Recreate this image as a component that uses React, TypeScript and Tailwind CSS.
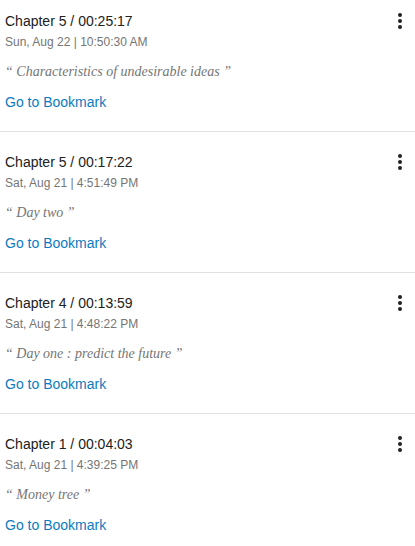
const bookmarks = [
  { chapter: "Chapter 5 / 00:25:17", date: "Sun, Aug 22 | 10:50:30 AM", note: "Characteristics of undesirable ideas" },
  { chapter: "Chapter 5 / 00:17:22", date: "Sat, Aug 21 | 4:51:49 PM", note: "Day two" },
  { chapter: "Chapter 4 / 00:13:59", date: "Sat, Aug 21 | 4:48:22 PM", note: "Day one : predict the future" },
  { chapter: "Chapter 1 / 00:04:03", date: "Sat, Aug 21 | 4:39:25 PM", note: "Money tree" },
];

function MoreIcon() {
  return (
    <svg width="24" height="24" viewBox="0 0 24 24" fill="#212121">
      <circle cx="12" cy="6" r="2" />
      <circle cx="12" cy="12" r="2" />
      <circle cx="12" cy="18" r="2" />
    </svg>
  );
}

export default function App() {
  return (
    <div className="min-h-screen bg-white font-['Liberation_Sans',Arial,sans-serif]">
      {bookmarks.map((b, i) => (
        <div
          key={i}
          className="flex border-b border-[#e0e0e0] pb-[19px] pl-[5px] pr-[3px] pt-[22px] first:pt-[13px]"
        >
          <div className="flex-1">
            <div className="text-[14px] leading-4 text-[#212121]">{b.chapter}</div>
            <div className="mt-[5px] text-[12px] leading-4 text-[#757575]">{b.date}</div>
            <div className="mt-[12px] font-['Liberation_Serif',serif] text-[14px] italic leading-5 text-[#757575]">
              “ {b.note} ”
            </div>
            <a href="#" className="mt-[10px] block text-[14px] leading-5 text-[#0b7bc1]">
              Go to Bookmark
            </a>
          </div>
          <button className="-mt-[4px] h-6 w-6">
            <MoreIcon />
          </button>
        </div>
      ))}
    </div>
  );
}
